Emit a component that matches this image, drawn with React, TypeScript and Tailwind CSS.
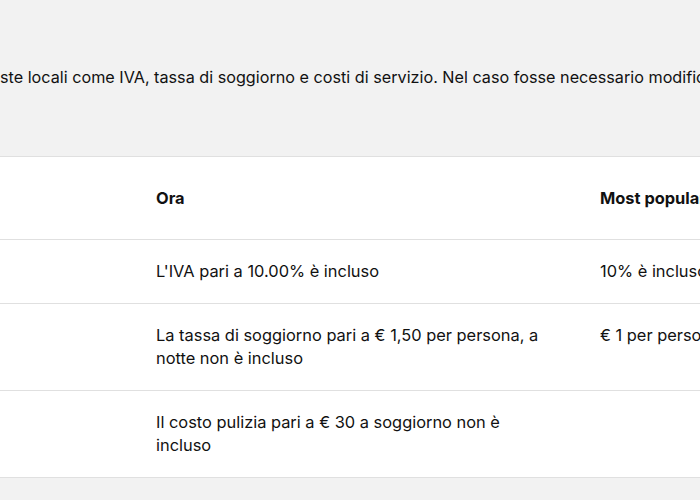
const rows = [
  { now: "L'IVA pari a 10.00% è incluso", popular: "10% è incluso" },
  {
    now: "La tassa di soggiorno pari a € 1,50 per persona, a notte non è incluso",
    popular: "€ 1 per persona, a notte non è incluso",
  },
  { now: "Il costo pulizia pari a € 30 a soggiorno non è incluso", popular: "" },
];

export default function App() {
  return (
    <div
      className="h-[500px] w-[700px] overflow-hidden bg-[#f2f2f2] text-[16.4px] text-[#111]"
      style={{ fontFamily: "Inter, 'Liberation Sans', sans-serif" }}
    >
      <p className="whitespace-nowrap pt-[65px] text-[16.2px] leading-[24px]">
        ste locali come IVA, tassa di soggiorno e costi di servizio. Nel caso fosse necessario modificare le date del soggiorno
      </p>

      {/* Tasse table */}
      <div className="mt-[67px] border-y border-[#e0e0e0] bg-white">
        <div className="grid grid-cols-[156px_444px_1fr] border-b border-[#e0e0e0] font-bold">
          <div />
          <div className="py-[29px] leading-[24px]">Ora</div>
          <div className="whitespace-nowrap py-[29px] leading-[24px]">Most popular</div>
        </div>
        {rows.map((row, i) => (
          <div
            key={i}
            className={
              i < rows.length - 1
                ? "grid grid-cols-[156px_444px_1fr] border-b border-[#e0e0e0]"
                : "grid grid-cols-[156px_444px_1fr]"
            }
          >
            <div />
            <div className="py-5 pr-[50px] leading-[23px]">{row.now}</div>
            <div className="whitespace-nowrap py-5 leading-[23px]">{row.popular}</div>
          </div>
        ))}
      </div>
    </div>
  );
}
